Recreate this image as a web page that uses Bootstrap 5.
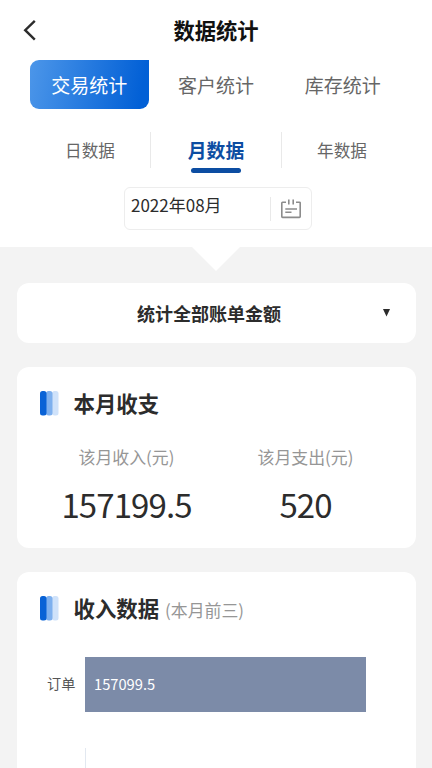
<!DOCTYPE html>
<html lang="zh-CN">
<head>
<meta charset="utf-8">
<meta name="viewport" content="width=device-width, initial-scale=1">
<title>数据统计</title>
<link href="https://cdn.jsdelivr.net/npm/bootstrap@5.3.0/dist/css/bootstrap.min.css" rel="stylesheet">
<style>
  body { font-family: "Noto Sans CJK SC", sans-serif; background: #f3f3f3; color: #2c2c2c; line-height: 1; }
  .screen { height: 768px; }
  .top-panel { height: 247px; }
  .title-bar { height: 60px; }
  .page-title { font-size: 21.3px; color: #111; }
  .back-btn { left: 22px; top: 18px; width: 16px; height: 24px; }
  .main-tabs { height: 49px; padding: 0 26px; }
  .main-tabs .nav-link { height: 49px; font-size: 19px; color: #666; margin: 0 4px; white-space: nowrap; }
  .main-tabs .nav-link.active { color: #fff; background: linear-gradient(100deg, #4c96e9, #0260d6 92%); border-radius: 9px 0 9px 9px; }
  .period-tabs { height: 36px; margin-top: 23px; padding: 0 19px 0 30px; }
  .period-item { font-size: 16.6px; color: #666; }
  .period-item.current { font-size: 18.8px; color: #0c4da2; border: solid #e9e9e9; border-width: 0 1px; width: 132px; }
  .period-item.current::after { content: ""; position: absolute; left: 40px; top: 36px; width: 50px; height: 5px; border-radius: 3px; background: #0c4da2; }
  .period-side { width: 120px; }
  .date-box { width: 188px; height: 43px; margin: 19px 0 0 124px; border: 1.5px solid #ededed; border-radius: 6px; padding: 0 10px 0 6px; }
  .date-text { font-size: 17px; margin-top: -8px; }
  .date-icon { border-left: 1px solid #e9e9e9; height: 24px; padding-left: 10px; }
  .notch { width: 50px; height: 25px; background: #fff; clip-path: polygon(0 0, 100% 0, 50% 100%); left: 191px; top: 246px; }
  .panel { margin: 0 16px 0 17px; border-radius: 12px; background: #fff; }
  .select-panel { height: 60px; margin-top: 36px; font-size: 18px; padding-right: 15px; }
  .caret { right: 26px; top: 26px; }
  .sum-panel { height: 180.5px; margin-top: 24px; padding: 24px 0 0 23px; }
  .income-panel { height: 196px; margin-top: 24.5px; padding: 24px 0 0 23px; border-radius: 12px 12px 0 0; }
  .head-text { font-size: 21.4px; margin: -2px 0 0 14.5px; }
  .head-row { height: 25px; }
  .head-note { font-size: 16.9px; color: #969696; margin: 3px 0 0 6px; }
  .sum-col { width: 179px; }
  .sums { margin: 33px 0 0 -3px; }
  .sum-label { font-size: 16.9px; color: #969696; }
  .sum-value { font-size: 33px; letter-spacing: -.9px; margin-top: 22px; }
  .chart-row { height: 55px; margin-top: 36px; }
  .chart-label { width: 45px; padding: 0 0 2px 7px; font-size: 14.2px; color: #555; }
  .chart-bar { background: #7c8ba8; color: #fff; font-size: 14.7px; padding: 0 0 1px 9px; }
  .axis { width: 1px; height: 20px; background: #e2e8f0; margin: 36px 0 0 45px; }
</style>
</head>
<body>
<div class="screen overflow-hidden">
<header class="top-panel bg-white">
  <div class="title-bar position-relative d-flex align-items-center justify-content-center">
    <a href="#" class="back-btn position-absolute" aria-label="返回">
      <svg class="d-block" width="16" height="24" viewBox="0 0 16 24" fill="none" stroke="#2c2c2c" stroke-width="2.4"><path d="M12.800 2.800 3.200 12.200l9.600 9.400"/></svg>
    </a>
    <h1 class="page-title fw-bold m-0">数据统计</h1>
  </div>
  <nav class="main-tabs nav nav-fill flex-nowrap">
    <div class="col-4"><a class="nav-link active d-flex align-items-center justify-content-center p-0" href="#">交易统计</a></div>
    <div class="col-4"><a class="nav-link d-flex align-items-center justify-content-center p-0" href="#">客户统计</a></div>
    <div class="col-4"><a class="nav-link d-flex align-items-center justify-content-center p-0" href="#">库存统计</a></div>
  </nav>
  <div class="period-tabs d-flex">
    <div class="period-item period-side d-flex align-items-center justify-content-center">日数据</div>
    <div class="period-item current position-relative fw-bold d-flex align-items-center justify-content-center">月数据</div>
    <div class="period-item period-side d-flex align-items-center justify-content-center">年数据</div>
  </div>
  <div class="date-box d-flex align-items-center justify-content-between">
    <span class="date-text">2022年08月</span>
    <span class="date-icon d-flex align-items-center">
      <svg width="20" height="20" viewBox="0 0 20 20" fill="none" stroke="#8c8c8c" stroke-width="1.600"><path d="M5 3.200H1.600a.8.8 0 0 0-.8.8v13.600a.8.8 0 0 0 .8.8h16.800a.8.8 0 0 0 .8-.8V4a.8.8 0 0 0-.8-.8H15M7.800 .5v5M12.200 .5v5M4.300 10h11.700M4.300 13.300h6.200"/></svg>
    </span>
  </div>
  <div class="notch position-absolute"></div>
</header>
<main>
  <section class="panel select-panel position-relative d-flex align-items-center justify-content-center fw-bold">
    统计全部账单金额
    <svg class="caret position-absolute" width="7" height="8" viewBox="0 0 7 8"><path d="M0 0h7L3.500 7.500z" fill="#2c2c2c"/></svg>
  </section>
  <section class="panel sum-panel">
    <div class="head-row d-flex align-items-center">
      <svg width="19" height="25" viewBox="0 0 19 25"><rect x="12" width="6.500" height="24.500" rx="2.500" fill="#cfe2fa"/><rect x="6" width="6.500" height="24.500" rx="2.500" fill="#7eb0ee"/><rect width="6.500" height="24.500" rx="2.500" fill="#0862d6"/></svg>
      <h2 class="head-text fw-bold">本月收支</h2>
    </div>
    <div class="sums d-flex text-center">
      <div class="sum-col"><div class="sum-label">该月收入(元)</div><div class="sum-value">157199.5</div></div>
      <div class="sum-col"><div class="sum-label">该月支出(元)</div><div class="sum-value">520</div></div>
    </div>
  </section>
  <section class="panel income-panel">
    <div class="head-row d-flex align-items-center">
      <svg width="19" height="25" viewBox="0 0 19 25"><rect x="12" width="6.500" height="24.500" rx="2.500" fill="#cfe2fa"/><rect x="6" width="6.500" height="24.500" rx="2.500" fill="#7eb0ee"/><rect width="6.500" height="24.500" rx="2.500" fill="#0862d6"/></svg>
      <h2 class="head-text fw-bold">收入数据</h2>
      <span class="head-note">(本月前三)</span>
    </div>
    <div class="chart-row d-flex">
      <div class="chart-label d-flex align-items-center">订单</div>
      <div class="chart-bar d-flex align-items-center" style="width: 281px">157099.5</div>
    </div>
    <div class="axis"></div>
  </section>
</main>
</div>
<script src="https://cdn.jsdelivr.net/npm/bootstrap@5.3.0/dist/js/bootstrap.bundle.min.js"></script>
</body>
</html>
